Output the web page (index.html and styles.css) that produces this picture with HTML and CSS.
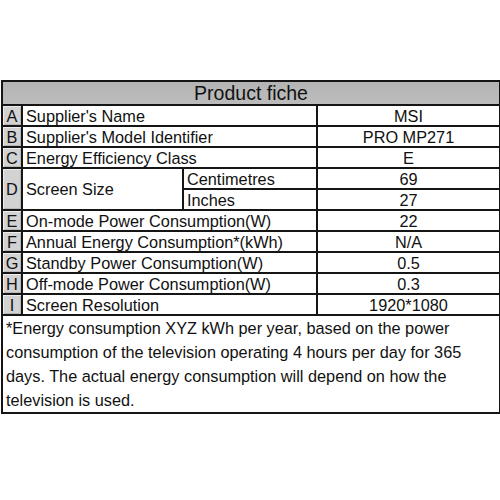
FILE: index.html
```html
<!DOCTYPE html>
<html lang="en">
<head>
    <meta charset="UTF-8">
    <title>Product fiche</title>
    <link rel="stylesheet" href="styles.css">
</head>
<body>
    <div class="sheet">
        <table class="fiche">
            <colgroup>
                <col class="col-letter">
                <col class="col-label">
                <col class="col-sub">
                <col class="col-value">
            </colgroup>
            <tr class="head">
                <th colspan="4">Product fiche</th>
            </tr>
            <tr>
                <td class="letter">A</td>
                <td colspan="2">Supplier's Name</td>
                <td class="value">MSI</td>
            </tr>
            <tr>
                <td class="letter">B</td>
                <td colspan="2">Supplier's Model Identifier</td>
                <td class="value">PRO MP271</td>
            </tr>
            <tr>
                <td class="letter">C</td>
                <td colspan="2">Energy Efficiency Class</td>
                <td class="value">E</td>
            </tr>
            <tr>
                <td class="letter" rowspan="2">D</td>
                <td rowspan="2">Screen Size</td>
                <td>Centimetres</td>
                <td class="value">69</td>
            </tr>
            <tr>
                <td>Inches</td>
                <td class="value">27</td>
            </tr>
            <tr>
                <td class="letter">E</td>
                <td colspan="2">On-mode Power Consumption(W)</td>
                <td class="value">22</td>
            </tr>
            <tr>
                <td class="letter">F</td>
                <td colspan="2">Annual Energy Consumption*(kWh)</td>
                <td class="value">N/A</td>
            </tr>
            <tr>
                <td class="letter">G</td>
                <td colspan="2">Standby Power Consumption(W)</td>
                <td class="value">0.5</td>
            </tr>
            <tr>
                <td class="letter">H</td>
                <td colspan="2">Off-mode Power Consumption(W)</td>
                <td class="value">0.3</td>
            </tr>
            <tr>
                <td class="letter">I</td>
                <td colspan="2">Screen Resolution</td>
                <td class="value">1920*1080</td>
            </tr>
            <tr class="note">
                <td colspan="4">*Energy consumption XYZ kWh per year, based on the power consumption of the television operating 4 hours per day for 365 days. The actual energy consumption will depend on how the television is used.</td>
            </tr>
        </table>
    </div>
</body>
</html>
```

FILE: styles.css
```css
* {
    margin: 0;
    padding: 0;
    box-sizing: border-box;
}

body {
    background: #fff;
    color: #111;
    font-family: 'Liberation Sans', Arial, sans-serif;
}

.sheet {
    padding: 80px 1px 0 1px;
}

/* Table */
.fiche {
    width: 498px;
    border-collapse: collapse;
    table-layout: fixed;
    font-size: 16.3px;
}

.col-letter { width: 20px; }
.col-label { width: 161px; }
.col-sub { width: 134px; }
.col-value { width: 183px; }

.fiche th,
.fiche td {
    border: 2px solid #151515;
    padding: 0 3px;
    height: 21px;
    line-height: 18px;
    white-space: nowrap;
    text-align: left;
    font-weight: normal;
}

.fiche .head th {
    height: 24px;
    background: linear-gradient(#b4b4b4, #bcbcbc);
    text-align: center;
    font-size: 19.5px;
    line-height: 20px;
}

.fiche td.letter {
    background: #d2d2d2;
    box-shadow: inset 1px 1px 0 #ececec, inset -1px -1px 0 #b8b8b8;
    text-align: center;
    padding: 0;
}

.fiche td.value {
    text-align: center;
}

.fiche .note td {
    height: 97px;
    white-space: normal;
    vertical-align: top;
    line-height: 24px;
    padding: 0 3px;
}
```
